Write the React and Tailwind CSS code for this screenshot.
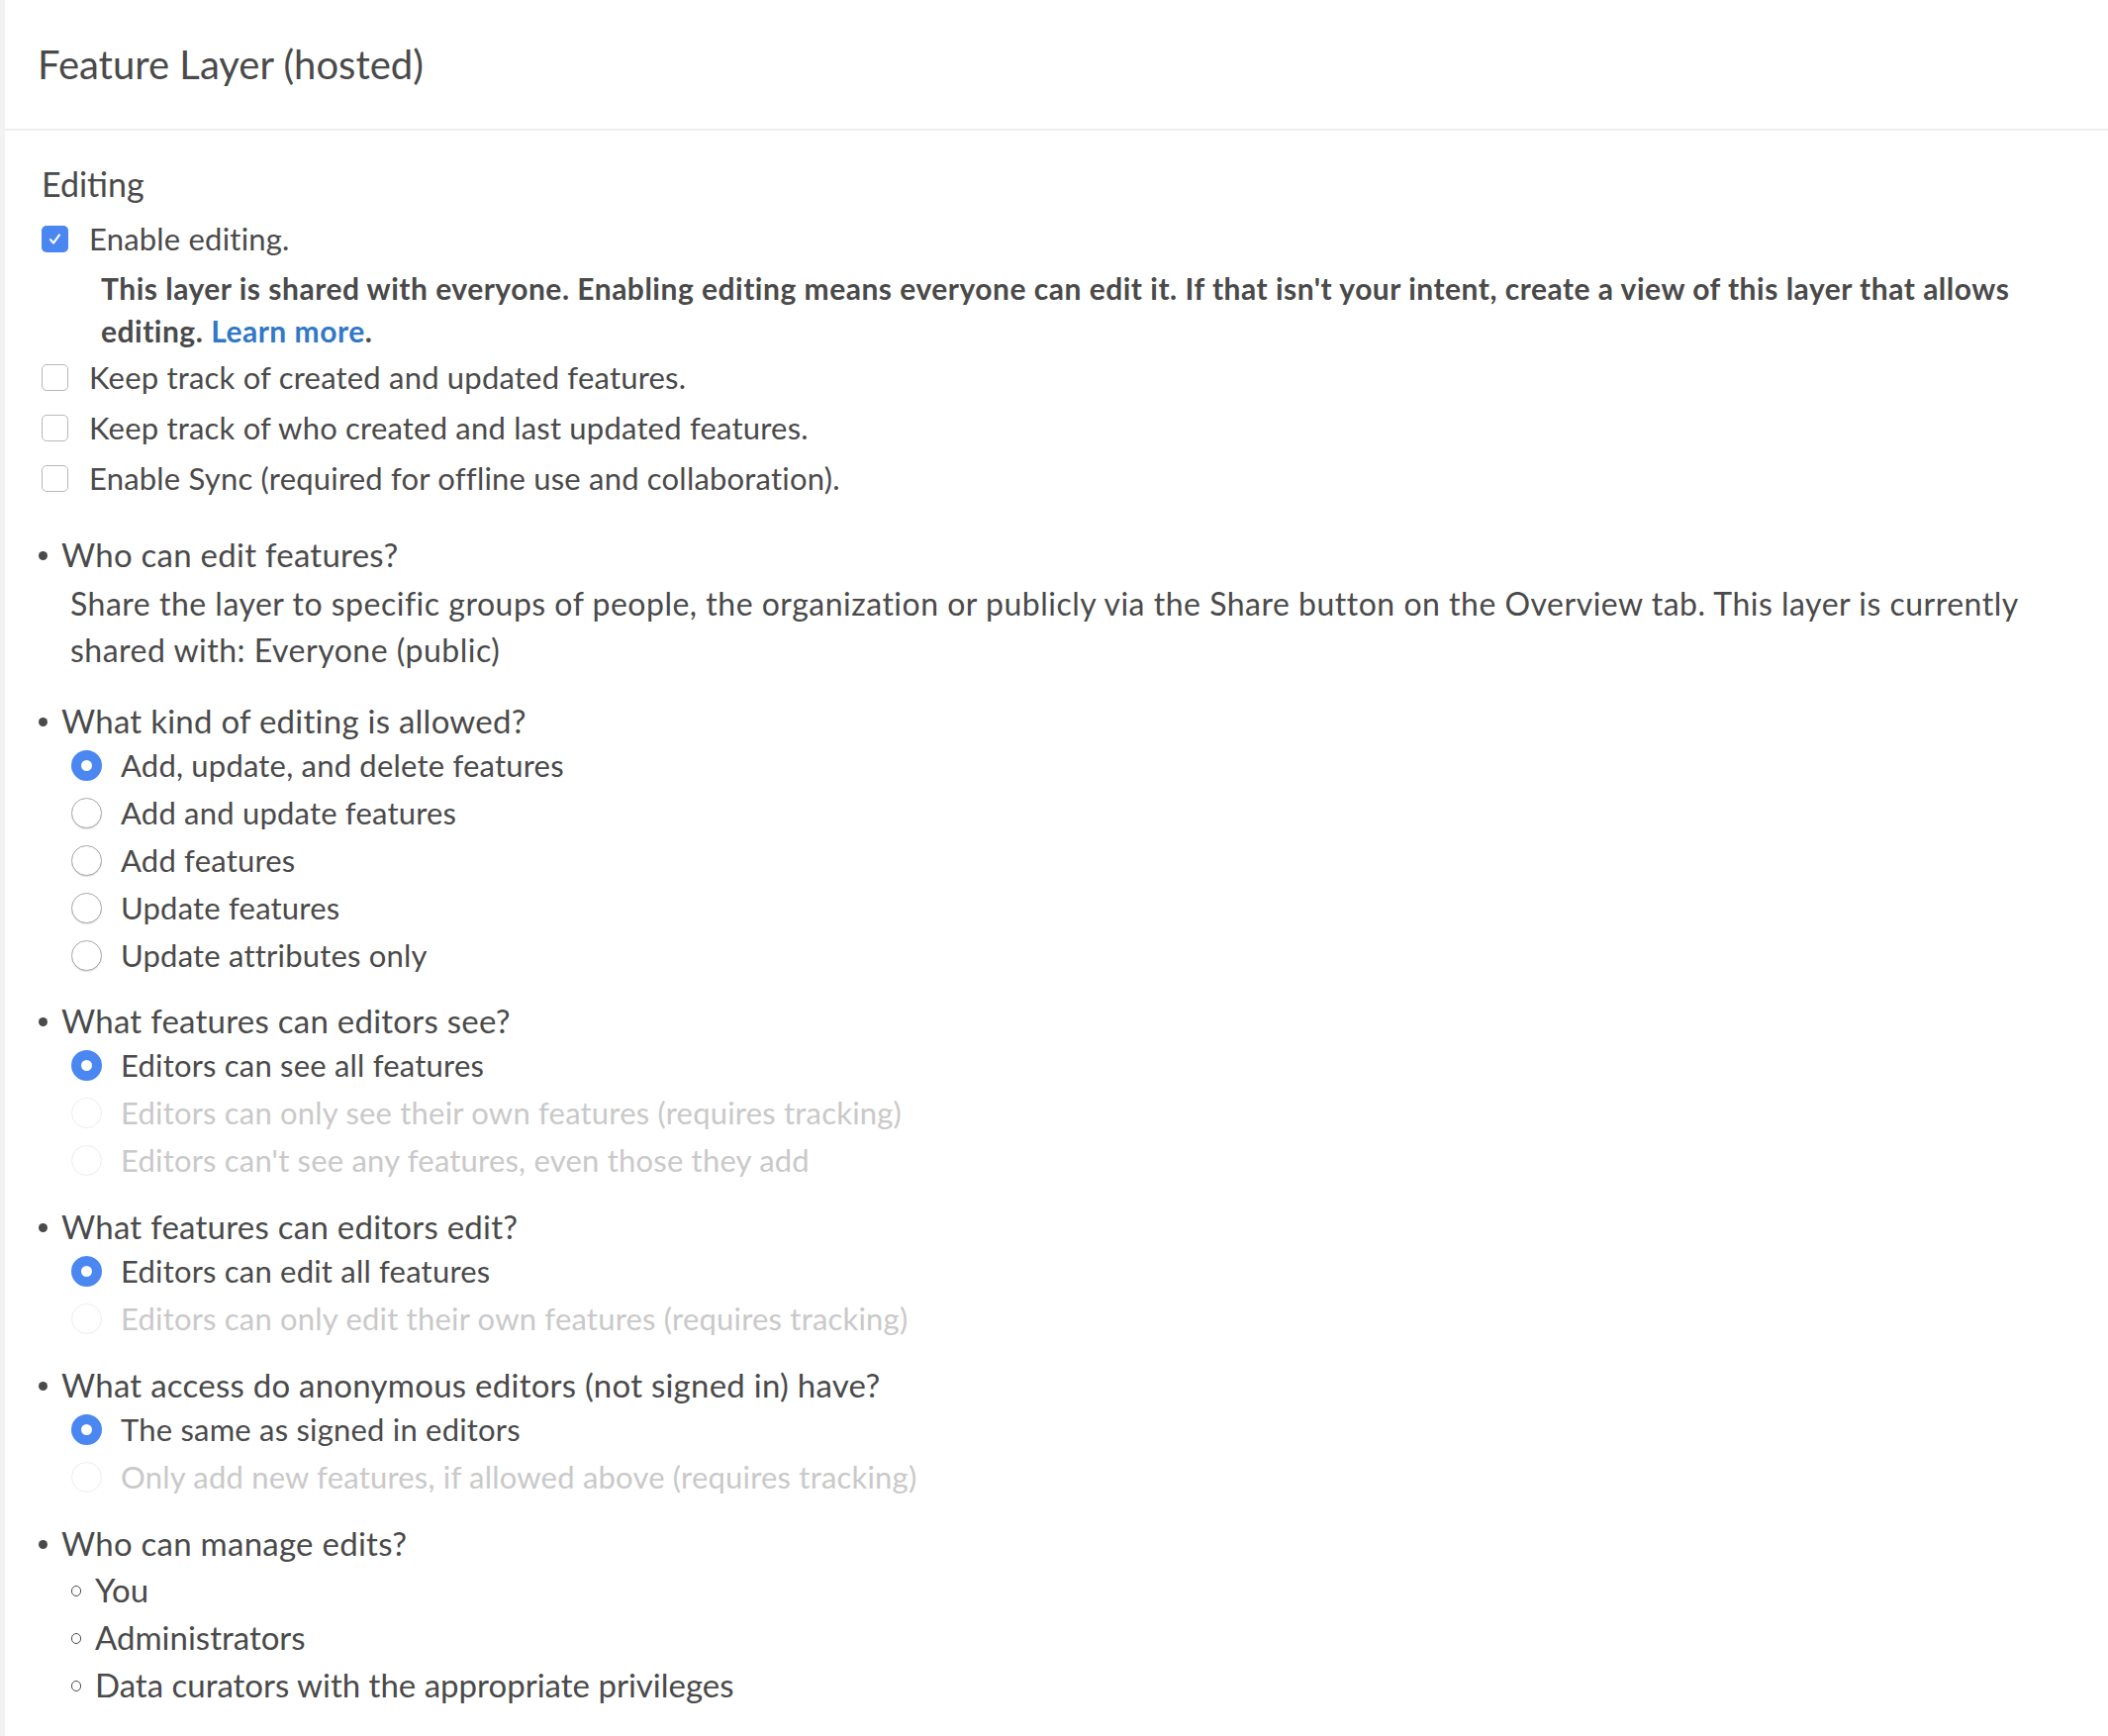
import React from 'react';

const font = { fontFamily: 'Lato, "Noto Sans", sans-serif' };

const Checkbox = ({ checked, label }) => (
    <div className="flex items-center h-[51px]">
        {checked ? (
            <span className="w-[27px] h-[27px] rounded-[5px] bg-[#4a87f0] flex items-center justify-center shrink-0">
                <svg width="17" height="17" viewBox="0 0 16 16">
                    <path d="M3.8 8.6 L6.6 11.8 L12.2 4.2" fill="none" stroke="#fff" strokeWidth="2" strokeLinecap="round" strokeLinejoin="round" />
                </svg>
            </span>
        ) : (
            <span className="w-[27px] h-[27px] rounded-[5px] border-[1.5px] border-[#b8b8b8] bg-white shrink-0" />
        )}
        <span className="ml-[21px] text-[31px] tracking-[0.2px] text-[#4a4a4a] whitespace-nowrap">{label}</span>
    </div>
);

const Radio = ({ state, label }) => {
    let circle = 'w-[31px] h-[31px] rounded-full border-[1.5px] border-[#a8a8a8] shadow-[0_1px_1px_rgba(0,0,0,0.12)] bg-white';
    let text = 'text-[#4a4a4a]';
    if (state === 'on') circle = 'w-[31px] h-[31px] rounded-full border-[10px] border-[#4a87f0] bg-white';
    if (state === 'off') {
        circle = 'w-[31px] h-[31px] rounded-full border-[1.5px] border-[#ededed] bg-white';
        text = 'text-[#c9c9c9]';
    }
    return (
        <div className="flex items-center h-[48px] pl-[30px]">
            <span className={`${circle} shrink-0`} />
            <span className={`ml-[19px] text-[31px] tracking-[0.2px] whitespace-nowrap ${text}`}>{label}</span>
        </div>
    );
};

const Question = ({ children, className = '' }) => (
    <div className={`flex items-center h-[40px] ${className}`}>
        <span className="w-[9px] h-[9px] rounded-full bg-[#4a4a4a] ml-[-3px] shrink-0" />
        <span className="ml-[14px] text-[33px] tracking-[0.25px] text-[#4a4a4a] whitespace-nowrap">{children}</span>
    </div>
);

const SubItem = ({ label }) => (
    <div className="flex items-center h-[48px] pl-[30px]">
        <span className="w-[10px] h-[11px] rounded-full border-[1.5px] border-[#4a4a4a] shrink-0" />
        <span className="ml-[14px] text-[33px] text-[#4a4a4a] whitespace-nowrap">{label}</span>
    </div>
);

export default function App() {
    return (
        <div className="flex min-h-screen bg-white" style={font}>
            <div className="w-[5px] bg-[#f2f2f2] shrink-0" />
            <div className="flex-1">
                <div className="h-[132px] flex items-center pl-[33px] border-b-2 border-[#eeeeee]">
                    <h1 className="text-[40px] text-[#4a4a4a]">Feature Layer (hosted)</h1>
                </div>

                <div className="pl-[37px] pt-[31px] pb-[40px]">
                    <div className="h-[44px] flex items-center text-[34px] text-[#4a4a4a]">Editing</div>

                    <div className="mt-[9px]">
                        <Checkbox checked label="Enable editing." />
                    </div>
                    <p className="mt-[3px] pl-[60px] text-[30px] tracking-[0.5px] leading-[43px] font-bold text-[#4a4a4a] whitespace-nowrap">
                        This layer is shared with everyone. Enabling editing means everyone can edit it. If that isn't your intent, create a view of this layer that allows
                        <br />
                        editing. <a className="text-[#3178c6]">Learn more</a>.
                    </p>
                    <Checkbox label="Keep track of created and updated features." />
                    <Checkbox label="Keep track of who created and last updated features." />
                    <Checkbox label="Enable Sync (required for offline use and collaboration)." />

                    <Question className="mt-[32px]">Who can edit features?</Question>
                    <p className="mt-[5px] pl-[29px] text-[32px] tracking-[0.5px] leading-[47px] text-[#4a4a4a] whitespace-nowrap">
                        Share the layer to specific groups of people, the organization or publicly via the Share button on the Overview tab. This layer is currently
                        <br />
                        shared with: Everyone (public)
                    </p>

                    <Question className="mt-[29px]">What kind of editing is allowed?</Question>
                    <Radio state="on" label="Add, update, and delete features" />
                    <Radio label="Add and update features" />
                    <Radio label="Add features" />
                    <Radio label="Update features" />
                    <Radio label="Update attributes only" />

                    <Question className="mt-[23px]">What features can editors see?</Question>
                    <Radio state="on" label="Editors can see all features" />
                    <Radio state="off" label="Editors can only see their own features (requires tracking)" />
                    <Radio state="off" label="Editors can't see any features, even those they add" />

                    <Question className="mt-[24px]">What features can editors edit?</Question>
                    <Radio state="on" label="Editors can edit all features" />
                    <Radio state="off" label="Editors can only edit their own features (requires tracking)" />

                    <Question className="mt-[24px]">What access do anonymous editors (not signed in) have?</Question>
                    <Radio state="on" label="The same as signed in editors" />
                    <Radio state="off" label="Only add new features, if allowed above (requires tracking)" />

                    <Question className="mt-[24px]">Who can manage edits?</Question>
                    <div className="mt-[3px]">
                        <SubItem label="You" />
                        <SubItem label="Administrators" />
                        <SubItem label="Data curators with the appropriate privileges" />
                    </div>
                </div>
            </div>
        </div>
    );
}
